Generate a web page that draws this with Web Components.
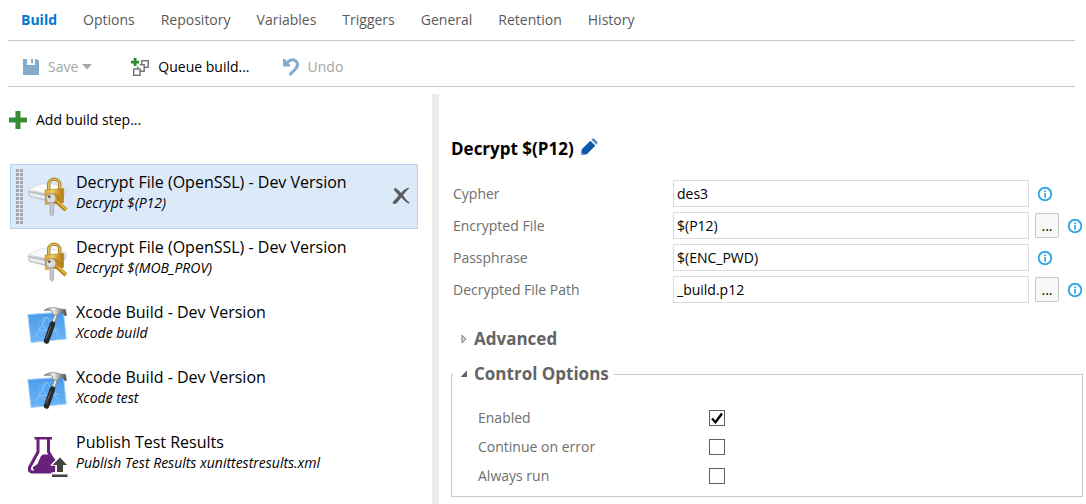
<!DOCTYPE html>
<html lang="en">
<head>
<meta charset="utf-8">
<title>Build definition</title>
<style>
  html, body { margin: 0; background: #fff; }
  body { font-family: "Open Sans", "Noto Sans", sans-serif; font-size: 14px; line-height: 20px; color: #000; }
</style>
</head>
<body>
<build-editor></build-editor>

<script>
const ICONS = {
  save: [16, 16, `<path fill="#84aace" d="M0 0h4v6h8V0h2l2 2v14H0z"/><path fill="#84aace" d="M8 0h2v4H8z"/>`],
  caret: [10, 6, `<path fill="#a9a9a9" d="M0 0h10L5 5.500z"/>`],
  queue: [18, 18, `<g fill="#fff" stroke="#707070" stroke-width="1.400"><rect x="10.700" y="2.700" width="6.500" height="6.500"/><rect x="6.700" y="6.700" width="6.500" height="6.500"/><rect x="2.700" y="11" width="6.300" height="6.300"/></g><path fill="#fff" d="M0 0h9v8.500H0z"/><path fill="#2f8a2f" d="M2.700 0h2.800v2.700H8.200v2.700H5.500V8H2.700V5.400H0V2.700H2.700z"/>`],
  undo: [16, 18, `<path fill="none" stroke="#84aace" stroke-width="3" d="M3 6C6 1.500 10.500.600 13 3.200c2.300 2.500 1.600 5.400-.6 7.800L6.500 17"/><path fill="#84aace" d="M0 1l2.500 0 1 3.500L7 6.200V8.500H0z"/>`],
  plus: [18, 18, `<path fill="#388a34" d="M6.500 0h5v6.500H18v5h-6.500V18h-5v-6.500H0v-5h6.500z"/>`],
  close: [18, 18, `<path fill="#5d5d5d" d="M2.500 1c2-.4 4.500 2.700 6.700 4.900C11 4 13.300 1.300 16.500.800l.6.700c-2.600 2-4.300 4.300-6 6.700 1.700 2.600 4 5.500 6.600 7.600l-.8.900c-3-1.400-5.500-4-7.600-6.200-1.800 2-3.800 6-6.800 6.600C.8 17 .2 15.800 1 14.800c1.800-2 4-4.100 5.600-6.500C5.300 6.500 3 4.500 1.800 2.800z"/>`],
  pencil: [18, 18, `<path fill="#0b5aa7" d="M1.800 11.200L10.300 2.700l5 5-8.500 8.500L.7 17.300z"/><path fill="#4f8cc4" d="M11.300 1.700L13 .2c.8-.4 4.900 3.700 4.600 4.600L16.300 6.700z"/><path fill="#fff" d="M1.500 14.600l1.800 1.700-1.900.4z"/>`],
  info: [16, 16, `<circle cx="8" cy="8" r="6.300" fill="#fff" stroke="#35a7e4" stroke-width="1.900"/><path fill="#35a7e4" d="M7.200 4.200h1.700v1.700H7.200zM7.200 7h1.700v4.800H7.200z"/>`],
  closed: [6, 10, `<path fill="#d8d8d8" stroke="#7a7a7a" d="M1 1.200v7.600L5 5z"/>`],
  open: [8, 8, `<path fill="#646464" d="M7 .500V7H.500z"/>`],
  lock: [42, 42, `<defs><linearGradient id="s" x2="0" y2="1"><stop stop-color="#f4f5f7"/><stop offset=".5" stop-color="#d6d8dc"/><stop offset="1" stop-color="#a9acb2"/></linearGradient><linearGradient id="g"><stop stop-color="#d9a92f"/><stop offset=".4" stop-color="#efcb5c"/><stop offset="1" stop-color="#a87410"/></linearGradient></defs>
    <path fill="url(#s)" stroke="#cfd2d7" stroke-width=".5" d="M.8 14Q5 11.500 13 8q13-2 25 3l2 3-2 5-18 6-17-4Q.5 19 .8 14z"/><path fill="#fbfbfc" d="M3 13.500Q10 9.500 14 9q12-1 22 3l-15 5.500z"/><path fill="#b9bcc2" d="M1.500 15l18 3.200v1.300L2 16.300z"/><path fill="#eceef0" d="M2.500 17l17 3.500v3L4 20z"/>
    <path fill="none" stroke="#a8802a" stroke-width="3.300" d="M21.700 15V8.500c0-7.200 11-7.200 11 0V14"/><path fill="none" stroke="#e3c56c" stroke-width="1.400" d="M21.700 15V8.500c0-7.200 11-7.200 11 0V14"/>
    <path fill="url(#g)" stroke="#b08326" stroke-width=".6" d="M18 14l18.500-1.500v14L18.500 28.500z"/><path stroke="#c08c1b" stroke-width=".8" d="M20 18l15-1M20 21.500l15-1M20 25l15-1"/>
    <path fill="none" stroke="#b37f14" stroke-width="4" d="M29 25l10 9"/><circle cx="28" cy="23" r="4" fill="#c8921f" stroke="#94650a" stroke-width=".8"/><path stroke="#ecc14b" stroke-width="1.400" d="M30 25l9 8.500"/>
    <circle cx="24" cy="22.500" r="4.800" fill="#d9dbde" stroke="#93969b" stroke-width=".8"/><circle cx="22.300" cy="20.700" r="1.400" fill="#71572a"/><path fill="#c3c6ca" stroke="#8e9197" stroke-width=".6" d="M23 26.500h3.600v12l-1.600 1.800-2-1.800z"/>`],
  xcode: [42, 42, `<defs><linearGradient id="b" x2="0" y2="1"><stop stop-color="#4a9aea"/><stop offset="1" stop-color="#6bb6f8"/></linearGradient><linearGradient id="h" x2="1" y2="0"><stop stop-color="#555"/><stop offset=".4" stop-color="#f3f3f3"/><stop offset="1" stop-color="#444"/></linearGradient></defs>
    <path fill="url(#b)" stroke="#a9d1f7" stroke-width="1" d="M.8 8.500L36.500 6l2.800 27L4 36.500z"/><g fill="none" stroke="#a6d4fb" stroke-width="1" opacity=".6"><path d="M8 31L20 11l12 20M11 25l21-2M18 11l-3 7 8 11"/><circle cx="20" cy="20" r="8.500" opacity=".5"/></g>
    <path fill="none" stroke="#8d9298" stroke-width="3.800" d="M30 7.500L26 18"/><path stroke="#f2f2f2" stroke-width="1.600" d="M29.500 7.500l-4 10.500"/>
    <path fill="none" stroke="#26282a" stroke-width="5.400" stroke-linecap="round" d="M25.500 18L19.500 35"/><path stroke="#6b6d70" stroke-width="1" d="M24 20L19 33"/>
    <path fill="url(#h)" stroke="#686868" stroke-width=".6" d="M17 4.500C21 1.200 28 .800 32 2.800l2.500.4 4 .2 1 6-1.500.5-2.500-3.400-3 .3-2 3-5-1.500.4-2.800C23 4.200 20.500 4.200 17 4.500z"/>`],
  flask: [42, 42, `<path fill="none" stroke="#68217a" stroke-width="3" stroke-linejoin="round" d="M11 3v13L2.500 31.500v3L4.500 36H26M21.500 3v13l5 8.500"/><path fill="#68217a" d="M7.500 1h17.500v2.500H7.500z"/><path fill="#68217a" d="M16 18.500h8l5 6-1 11.500H8L5.500 31.500l5-3.500L14 20z"/><path fill="#fff" d="M23 29.500L33 19l9 9v14H24v-5.500h4.500V30z"/><path fill="#424242" d="M33 21.500l7 7.500h-4v7h-6v-7h-4.500zM25 38.500h15.500v2.500H25z"/>`]
};

class Base extends HTMLElement {
  connectedCallback() {
    if (this.shadowRoot) return;
    const root = this.attachShadow({ mode: "open" });
    const t = document.createElement("template");
    t.innerHTML = `<style>
      * { box-sizing: border-box; }
      button, input { font: inherit; color: inherit; margin: 0; }
      button { background: none; border: 0; padding: 0; text-align: left; cursor: pointer; }
      ${this.css()}</style>${this.html()}`;
    root.append(t.content.cloneNode(true));
  }
  attr(name) { return this.getAttribute(name) || ""; }
}

customElements.define("ui-icon", class extends Base {
  css() { return `:host { display: inline-flex; flex: none; } svg { display: block; }`; }
  html() {
    const [w, h, body] = ICONS[this.attr("name")];
    return `<svg width="${w}" height="${h}" viewBox="0 0 ${w} ${h}" aria-hidden="true">${body}</svg>`;
  }
});

customElements.define("nav-tab", class extends Base {
  css() { return `
    :host { display: block; }
    a { color: #5a5a5a; text-decoration: none; }
    :host([selected]) a { color: #007acc; font-weight: 700; }`; }
  html() { return `<a href="#"><slot></slot></a>`; }
});

customElements.define("nav-tabs", class extends Base {
  css() { return `
    :host { display: block; }
    nav { display: flex; gap: 26px; height: 41px; padding: 10px 13px 0; border-bottom: 1px solid #c8c8c8; }`; }
  html() { return `<nav><slot></slot></nav>`; }
});

customElements.define("tool-button", class extends Base {
  css() { return `
    :host { display: block; }
    button { display: flex; align-items: center; gap: 9px; }
    button:disabled { color: #a5a5a5; cursor: default; }
    span { display: flex; align-items: center; gap: 4px; }
    :host([menu]) span { padding-right: 6px; }`; }
  html() { return `<button type="button" ${this.hasAttribute("disabled") ? "disabled" : ""}>
    <ui-icon name="${this.attr("icon")}"></ui-icon>
    <span><slot></slot>${this.hasAttribute("menu") ? `<ui-icon name="caret"></ui-icon>` : ""}</span></button>`; }
});

customElements.define("tool-bar", class extends Base {
  css() { return `
    :host { display: flex; align-items: center; gap: 33px; height: 46px; padding: 6px 15px 0; border-bottom: 1px solid #c8c8c8; box-sizing: border-box; }`; }
  html() { return `<slot></slot>`; }
});

customElements.define("build-step", class extends Base {
  css() { return `
    :host { display: flex; align-items: center; height: 65px; box-sizing: border-box; padding: 0 6px 0 5px; border: 1px solid transparent; }
    :host([selected]) { background: #dbe9f9; border-color: #b5d3f5; }
    .grip { flex: none; width: 7px; height: 55px; margin-right: 4px; }
    :host([selected]) .grip {
      background:
        repeating-linear-gradient(90deg, transparent 0 3px, #dbe9f9 3px 4px),
        repeating-linear-gradient(transparent 0 3px, #dbe9f9 3px 4px),
        #a3a8ae;
    }
    .step { flex: 1; display: flex; align-items: center; gap: 7px; min-width: 0; }
    .text { display: block; padding-bottom: 8px; }
    .title { display: block; font-size: 16px; line-height: 21px; }
    .sub { display: block; font-size: 14px; line-height: 20px; font-style: italic; }
    .del { padding: 3px 1px 0; }`; }
  html() { return `<span class="grip"></span>
    <button type="button" class="step"><ui-icon name="${this.attr("icon")}"></ui-icon>
      <span class="text"><span class="title">${this.attr("heading")}</span><span class="sub"><slot></slot></span></span></button>
    ${this.hasAttribute("selected") ? `<button type="button" class="del" aria-label="Remove step"><ui-icon name="close"></ui-icon></button>` : ""}`; }
});

customElements.define("step-list", class extends Base {
  css() { return `
    :host { display: block; padding: 16px 14px 0 10px; }
    .add { display: flex; align-items: center; gap: 9px; margin: 0 0 34px -1px; }`; }
  html() { return `
    <button type="button" class="add"><ui-icon name="plus"></ui-icon>Add build step...</button>
    <slot></slot>`; }
});

customElements.define("field-row", class extends Base {
  css() { return `
    :host { display: grid; grid-template-columns: 222px 1fr 54px; align-items: center; height: 27px; margin-bottom: 5px; }
    label { padding-left: 2px; color: #6e6e6e; }
    input { width: 100%; height: 27px; padding: 0 3px; border: 1px solid #dcdcdc; background: #fff; outline: 0; }
    .aux { display: flex; align-items: center; gap: 8px; padding-left: 6px; }
    .aux ui-icon { margin-left: 2px; }
    .browse { width: 25px; height: 25px; border: 1px solid #c6c6c6; border-radius: 2px; background: #f8f8f8; text-align: center; }
    .browse + ui-icon { margin: 0; }`; }
  html() { return `
    <label for="f">${this.attr("label")}</label>
    <input id="f" type="text" value="${this.attr("value")}">
    <span class="aux">${this.hasAttribute("browse") ? `<button type="button" class="browse" aria-label="Browse">...</button>` : ""}<ui-icon name="info"></ui-icon></span>`; }
});

customElements.define("check-row", class extends Base {
  css() { return `
    :host { display: grid; grid-template-columns: 231px 1fr; align-items: center; height: 29px; color: #6e6e6e; }
    input { appearance: none; width: 16px; height: 16px; border: 1px solid #606060; background: #fff; }
    input:checked { background: #fff url("data:image/svg+xml,%3Csvg xmlns='http://www.w3.org/2000/svg' viewBox='0 0 14 14'%3E%3Cpath fill='none' stroke='black' stroke-width='2.400' d='M2 7.500l3.500 3.700L12 2.500'/%3E%3C/svg%3E") center / 14px 14px no-repeat; }`; }
  html() { return `<label for="c">${this.attr("label")}</label><input id="c" type="checkbox" ${this.hasAttribute("checked") ? "checked" : ""}>`; }
});

customElements.define("option-group", class extends Base {
  css() { return `
    :host { display: block; color: #646464; }
    button { display: flex; align-items: center; gap: 6px; font-size: 17px; line-height: 24px; font-weight: 700; }
    ui-icon { width: 8px; justify-content: center; }
    .plain { padding-left: 9px; }
    fieldset { margin: 0; min-width: 0; padding: 17px 0 6px 26px; border: 1px solid #c8c8c8; }
    legend { padding: 0 5px 0 7px; margin-left: -25px; }`; }
  html() {
    const open = this.hasAttribute("open");
    const b = `<button type="button" class="${open ? "" : "plain"}" aria-expanded="${open}"><ui-icon name="${open ? "open" : "closed"}"></ui-icon>${this.attr("heading")}</button>`;
    return open ? `<fieldset><legend>${b}</legend><slot></slot></fieldset>` : b;
  }
});

customElements.define("step-details", class extends Base {
  css() { return `
    :host { display: block; padding: 43px 3px 0 12px; }
    header { display: flex; align-items: center; gap: 6px; margin-bottom: 19px; }
    h1 { margin: 0; font-size: 17px; line-height: 24px; font-weight: 700; }
    .groups { display: grid; gap: 11px; padding-top: 19px; }`; }
  html() { return `
    <header><h1>${this.attr("heading")}</h1><button type="button" aria-label="Rename"><ui-icon name="pencil"></ui-icon></button></header>
    <slot></slot>
    <div class="groups"><slot name="group"></slot></div>`; }
});

customElements.define("build-editor", class extends Base {
  css() { return `
    :host { display: flex; flex-direction: column; min-height: 100vh; }
    .top { margin: 0 11px 7px 8px; }
    main { flex: 1; display: grid; grid-template-columns: 432px 7px 1fr; }
    .split { background: #ececec; }`; }
  html() { return `
    <div class="top">
      <nav-tabs>
        <nav-tab selected>Build</nav-tab><nav-tab>Options</nav-tab><nav-tab>Repository</nav-tab><nav-tab>Variables</nav-tab>
        <nav-tab>Triggers</nav-tab><nav-tab>General</nav-tab><nav-tab>Retention</nav-tab><nav-tab>History</nav-tab>
      </nav-tabs>
      <tool-bar>
        <tool-button icon="save" menu disabled>Save</tool-button>
        <tool-button icon="queue">Queue build...</tool-button>
        <tool-button icon="undo" disabled>Undo</tool-button>
      </tool-bar>
    </div>
    <main>
      <step-list>
        <build-step selected icon="lock" heading="Decrypt File (OpenSSL) - Dev Version">Decrypt $(P12)</build-step>
        <build-step icon="lock" heading="Decrypt File (OpenSSL) - Dev Version">Decrypt $(MOB_PROV)</build-step>
        <build-step icon="xcode" heading="Xcode Build - Dev Version">Xcode build</build-step>
        <build-step icon="xcode" heading="Xcode Build - Dev Version">Xcode test</build-step>
        <build-step icon="flask" heading="Publish Test Results">Publish Test Results xunittestresults.xml</build-step>
      </step-list>
      <div class="split"></div>
      <step-details heading="Decrypt $(P12)">
        <field-row label="Cypher" value="des3"></field-row>
        <field-row label="Encrypted File" value="$(P12)" browse></field-row>
        <field-row label="Passphrase" value="$(ENC_PWD)"></field-row>
        <field-row label="Decrypted File Path" value="_build.p12" browse></field-row>
        <option-group slot="group" heading="Advanced"></option-group>
        <option-group slot="group" heading="Control Options" open>
          <check-row label="Enabled" checked></check-row>
          <check-row label="Continue on error"></check-row>
          <check-row label="Always run"></check-row>
        </option-group>
      </step-details>
    </main>`; }
});
</script>
</body>
</html>
